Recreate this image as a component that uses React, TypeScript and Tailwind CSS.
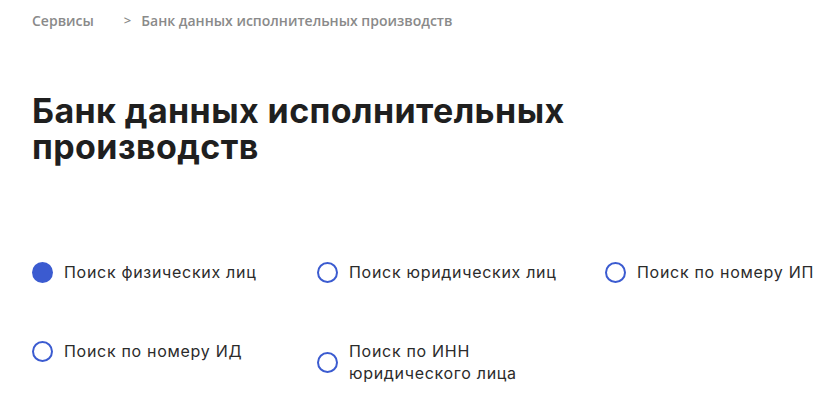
import React, { useState } from "react";

const options = [
  { id: "fiz", label: "Поиск физических лиц" },
  { id: "ur", label: "Поиск юридических лиц" },
  { id: "ip", label: "Поиск по номеру ИП" },
  { id: "id", label: "Поиск по номеру ИД" },
  { id: "inn", label: "Поиск по ИНН юридического лица", wrap: true },
];

const RadioItem = ({
  label,
  checked,
  wrap,
  onSelect,
}: {
  label: string;
  checked: boolean;
  wrap?: boolean;
  onSelect: () => void;
}) => {
  return (
    <button
      type="button"
      onClick={onSelect}
      className="flex items-center gap-[11px] text-left"
    >
      <span
        className={
          checked
            ? "shrink-0 w-[21px] h-[21px] rounded-full bg-[#3b5bd0]"
            : "shrink-0 w-[21px] h-[21px] rounded-full border-2 border-[#3b5bd0] bg-white"
        }
      />
      <span
        className={
          wrap
            ? "text-[16px] leading-[22px] tracking-[0.7px] text-[#2b2b2b] max-w-[180px]"
            : "text-[16px] leading-[22px] tracking-[0.7px] text-[#2b2b2b] whitespace-nowrap"
        }
      >
        {label}
      </span>
    </button>
  );
};

const App = () => {
  const [selected, setSelected] = useState("fiz");
  return (
    <div
      className="w-[827px] h-[414px] bg-white px-8 overflow-hidden"
      style={{ fontFamily: "Inter, 'Noto Sans', sans-serif" }}
    >
      <nav
        className="flex items-center h-[40px] pt-[1px] text-[14px] font-semibold text-[#8a8a8a]"
        style={{ fontFamily: "'Open Sans', sans-serif" }}
      >
        <span>Сервисы</span>
        <span className="ml-[30px] mr-[10px] text-[13px]">&gt;</span>
        <span>Банк данных исполнительных производств</span>
      </nav>
      <h1 className="mt-[53px] text-[34px] leading-[36px] tracking-[0.4px] font-bold text-[#1f1f1f] max-w-[580px]">
        Банк данных исполнительных производств
      </h1>
      <div className="mt-[96px] grid grid-cols-[285px_288px_1fr] gap-y-[57px] items-start">
        {options.map((o) => (
          <RadioItem
            key={o.id}
            label={o.label}
            wrap={o.wrap}
            checked={selected === o.id}
            onSelect={() => setSelected(o.id)}
          />
        ))}
      </div>
    </div>
  );
};

export default App;
